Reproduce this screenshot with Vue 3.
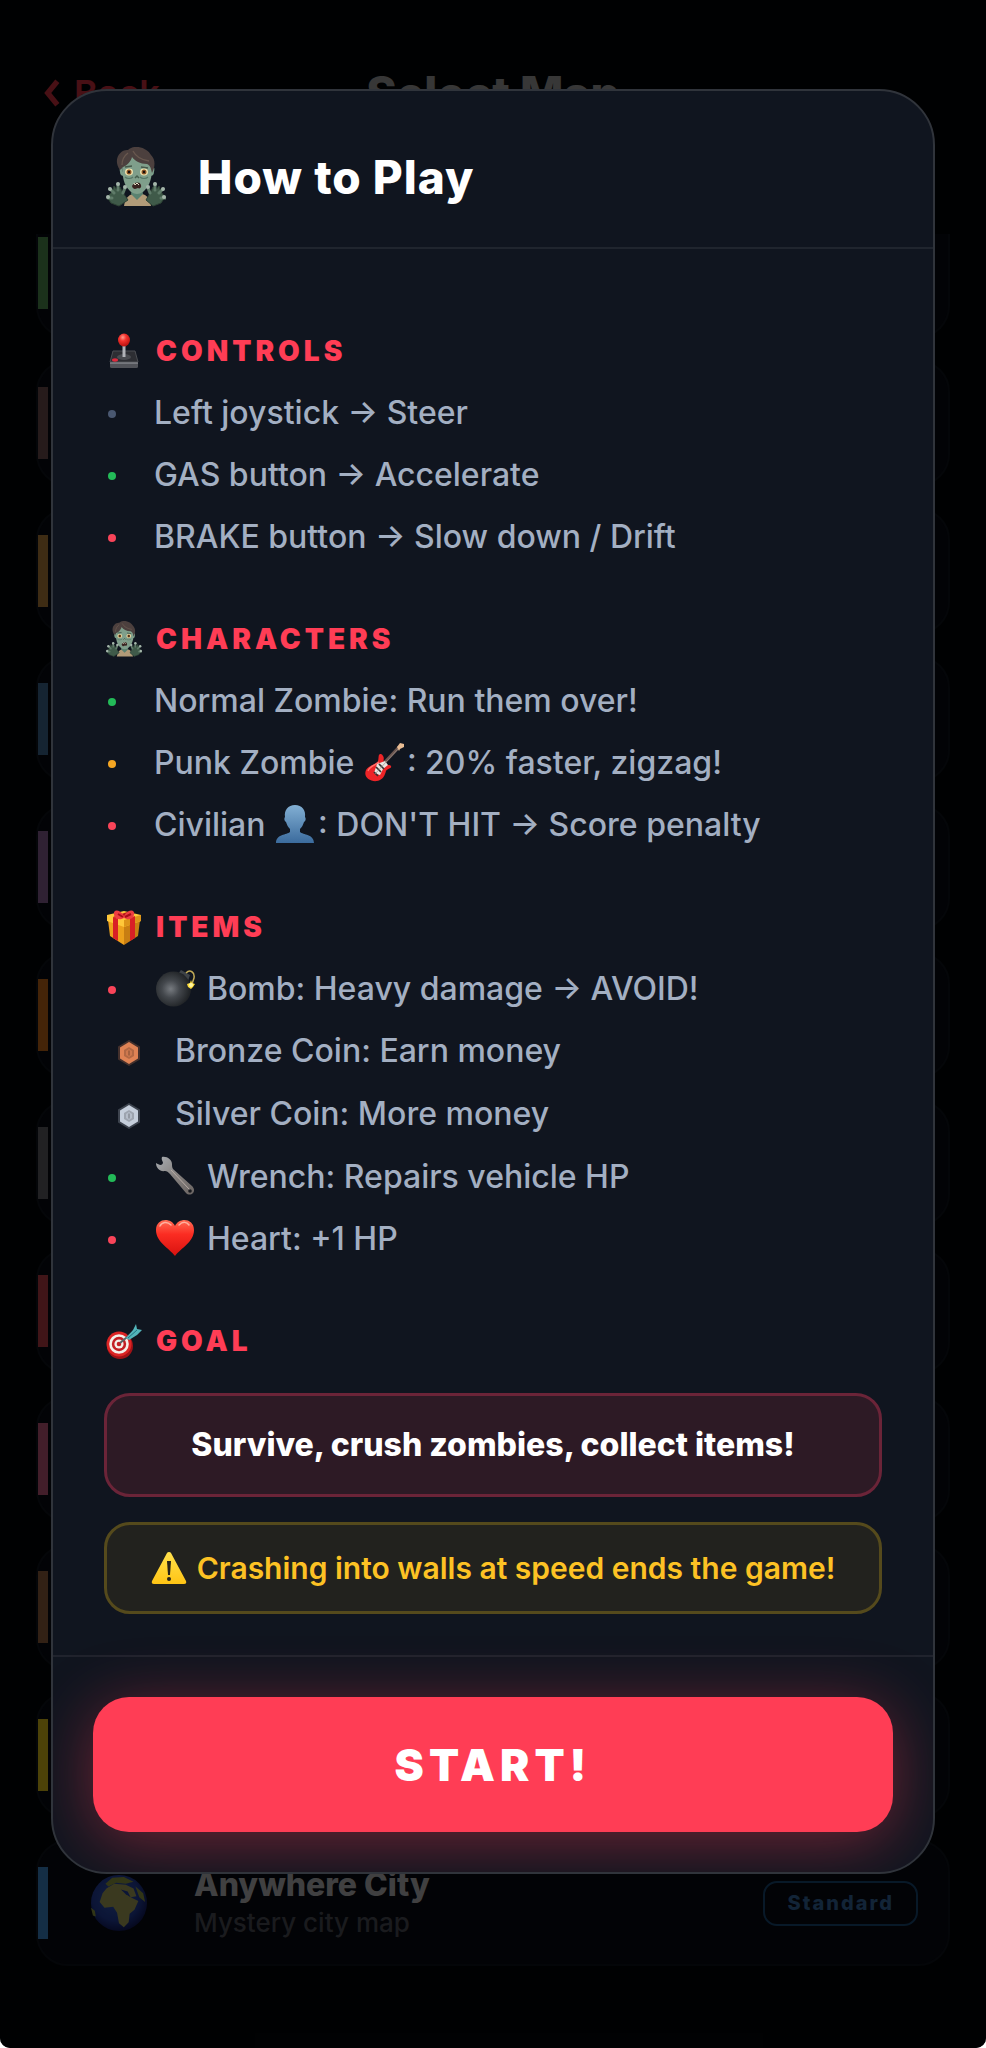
<template>
  <div class="screen">

    <!-- SPRITE -->
    <svg class="sprite" aria-hidden="true">
      <defs>
        <linearGradient id="g-bust" x1="0" y1="0" x2="0" y2="1">
          <stop offset="0" stop-color="#82afd3" />
          <stop offset="1" stop-color="#3b6b9d" />
        </linearGradient>
        <linearGradient id="g-heart" x1="0" y1="0" x2="0" y2="1">
          <stop offset="0" stop-color="#ff6d55" />
          <stop offset="0.4" stop-color="#fb2c22" />
          <stop offset="1" stop-color="#d8120f" />
        </linearGradient>
        <linearGradient id="g-metal" x1="0" y1="0" x2="1" y2="1">
          <stop offset="0" stop-color="#a9adb2" />
          <stop offset="0.5" stop-color="#85817f" />
          <stop offset="1" stop-color="#6a6462" />
        </linearGradient>
        <linearGradient id="g-warn" x1="0" y1="0" x2="0" y2="1">
          <stop offset="0" stop-color="#ffe14d" />
          <stop offset="1" stop-color="#ffc414" />
        </linearGradient>
        <radialGradient id="g-bomb" cx="0.42" cy="0.5" r="0.55">
          <stop offset="0" stop-color="#777b80" />
          <stop offset="0.45" stop-color="#44484d" />
          <stop offset="1" stop-color="#202326" />
        </radialGradient>
        <radialGradient id="g-ball" cx="0.4" cy="0.3" r="0.7">
          <stop offset="0" stop-color="#ff9a8c" />
          <stop offset="0.4" stop-color="#f5332e" />
          <stop offset="1" stop-color="#b8110f" />
        </radialGradient>
        <radialGradient id="g-earth" cx="0.45" cy="0.4" r="0.6">
          <stop offset="0" stop-color="#3c69d8" />
          <stop offset="0.7" stop-color="#2746b4" />
          <stop offset="1" stop-color="#141f6b" />
        </radialGradient>
      </defs>

      <symbol id="zombie" viewBox="0 0 60 60">
        <path d="M18 59c1-7 4-11 9-12h9c5 1 8 5 9 12z" fill="#b19b78" />
        <path d="M25 47l6 6 6-6-1-5H26z" fill="#5a8270" />
        <path d="M16 22c-1-3-3-1-2 3 0 3 2 4 4 4zM46 22c2-3 3-1 2 3 0 3-2 4-4 4z" fill="#7c9f8a" />
        <path d="M16 16c0-9 30-10 30 3 0 9-1 15-4 20-3 5-7 8-11 8s-8-3-11-8c-3-5-4-14-4-23z" fill="#7f9f8b" />
        <path d="M14 23C6 12 15 2 22 3c8-7 20-1 23 5 5 5 4 12 1 18-1-5-2-8-5-9-7 0-12-3-15-7-1 5-6 9-9 10-1 1-2 2-3 3z" fill="#4c403e" />
        <path d="M27 4c3 6 9 9 16 10M22 6c-4 3-6 7-6 12" fill="none" stroke="#69584f" stroke-width="1.3" />
        <path d="M19 20l7-1M35 20l7 1" stroke="#46594b" stroke-width="1.4" />
        <ellipse cx="23" cy="25" rx="4" ry="3.4" fill="#f1e3ad" />
        <ellipse cx="38" cy="25" rx="4" ry="3.4" fill="#f1e3ad" />
        <circle cx="23" cy="25" r="2.5" fill="#8c5425" />
        <circle cx="38" cy="25" r="2.5" fill="#8c5425" />
        <circle cx="23" cy="25" r="1.2" fill="#15100d" />
        <circle cx="38" cy="25" r="1.2" fill="#15100d" />
        <path d="M19 30c2 2 6 2 8 0M34 30c2 2 6 2 8 0" fill="none" stroke="#567766" stroke-width="1.2" />
        <path d="M29 31l2-2 2 2" stroke="#45604f" stroke-width="1.5" fill="none" />
        <path d="M26 39c2-4 8-5 9-1 1 3-2 4-3 3-2 1-5 2-6-2z" fill="#392421" />
        <path d="M28 36l1 2 2-2 2 2" stroke="#e6e2c8" fill="none" />
        <path d="M17 46l-3-6-2 4-4-5-2 6-5 5 4 6 8 3 9-6zM44 46l3-6 2 4 4-5 2 6 4 5-4 6-8 3-7-6z" fill="#3f5a49" stroke="#2e4235" />
        <path d="M8 46L4 42M12 43V37M17 46l2-5M6 51H2M53 46l4-4M49 43v-6M44 46l-2-5M55 51h4" fill="none" stroke="#5f7b69" stroke-width="3" stroke-linecap="round" />
        <g fill="#a4b5aa">
          <circle cx="4" cy="42" r="2" /><circle cx="12" cy="37" r="2" /><circle cx="19" cy="40" r="2" /><circle cx="2" cy="50" r="2" />
          <circle cx="57" cy="42" r="2" /><circle cx="49" cy="37" r="2" /><circle cx="42" cy="40" r="2" /><circle cx="58" cy="50" r="2" />
        </g>
      </symbol>

      <symbol id="joystick" viewBox="0 0 36 36">
        <path d="M7 18h22l3 13-1 4H5l-1-4z" fill="#3b3d42" />
        <path d="M7 18h22l3 11H4z" fill="#2d2e33" stroke="#4b4d52" />
        <path d="M4 30h28v4q0 1-2 1H6q-2 0-2-1z" fill="#515359" />
        <path d="M4 30h28" stroke="#9a9ca1" />
        <ellipse cx="18" cy="24" rx="7" ry="3" fill="#494b50" />
        <path d="M16.5 10h3v14h-3z" fill="#b1b3b8" />
        <ellipse cx="18" cy="7" rx="6" ry="6.5" fill="url(#g-ball)" />
        <ellipse cx="9" cy="27" rx="3" ry="1.7" fill="#dd2b3e" />
      </symbol>

      <symbol id="gift" viewBox="0 0 36 36">
        <path d="M2 11l16 6v19L4 27z" fill="#eda11c" />
        <path d="M34 11l-16 6v19l14-9z" fill="#c87e12" />
        <path d="M1 6l17-4 17 4v6l-17 6L1 12z" fill="#ffc83a" />
        <path d="M18 11l17-5v6l-17 6z" fill="#dd9519" />
        <path d="M7 8l5 2v22l-5-3zM24 9l5-2v22l-5 3z" fill="#d91f26" />
        <path d="M7 8l17-6 5 2-17 6z" fill="#b5151c" />
        <path d="M18 9C12 12 8 9 8 5c-1-5 6-5 10 2 4-7 11-7 10-2 0 4-4 7-10 4z" fill="#ef3e42" />
        <path d="M12 5l5 3M25 5l-6 3" stroke="#a80e18" stroke-width="2" />
      </symbol>

      <symbol id="target" viewBox="0 0 36 36">
        <ellipse cx="14" cy="23" rx="13" ry="13" fill="#a01216" />
        <ellipse cx="13" cy="21" rx="12.5" ry="12.5" fill="#dc2424" />
        <circle cx="13" cy="21" r="9.8" fill="#f4efe9" />
        <circle cx="13" cy="21" r="7.2" fill="#c32024" />
        <circle cx="13" cy="21" r="4.6" fill="#f4efe9" />
        <circle cx="13" cy="21" r="2.3" fill="#c32024" />
        <path d="M14 20L26 10" stroke="#5a6668" stroke-width="2" />
        <path d="M20 15l7-8 3-6 1 5 5 1-5 5-8 5z" fill="#53b4ba" />
        <path d="M22 15l9-8" stroke="#1e7683" />
      </symbol>

      <symbol id="guitar" viewBox="0 0 40 40">
        <path d="M21 20L35 5" stroke="#6c5650" stroke-width="3" />
        <path d="M33 5l3-4 4 1v3l-4 2-1 2z" fill="#e9bd94" />
        <path d="M16 12c-2 1-1 4-2 7-1 3-9 4-12 9-3 7 4 12 11 11 6-1 8-6 9-10 2-3 6-2 5-5-1-2-4 0-6-2-3-2 0-6-2-8-1-2-2-2-3-2z" fill="#ed2427" />
        <path d="M4 29c1-5 8-6 11-9" fill="none" stroke="#ff716b" stroke-width="1.4" />
        <path d="M13 22l8-3 3 4-5 4-3 6-6-2z" fill="#e8e6e2" />
        <path d="M12 25l5 5M15 22l5 5M10 30l4 4" stroke="#34302f" stroke-width="1.7" />
        <path d="M11 32L34 7" stroke="#9a8f89" stroke-width="0.7" />
      </symbol>

      <symbol id="bust" viewBox="0 0 40 40">
        <path d="M20 1c7 0 11 5 10 12 1 1 1 4-1 5-1 3-2 5-4 7v3c3 3 14 2 14 11H1c0-9 11-8 14-11v-3c-2-2-3-4-4-7-2-1-2-4-1-5C9 6 13 1 20 1z" fill="url(#g-bust)" />
      </symbol>

      <symbol id="bomb" viewBox="0 0 40 40">
        <path d="M23 6l3-4 9 5-2 6z" fill="#3e4348" />
        <circle cx="18.5" cy="21" r="17.5" fill="url(#g-bomb)" />
        <path d="M31 5c4-4 9-1 8 5l-2 6" fill="none" stroke="#c2ab57" stroke-width="1.5" />
        <path d="M36 12l1 3 3 1-2 3-2 2-3-2-1-3 3-1z" fill="#ffdd3a" />
        <circle cx="36" cy="17" r="2" fill="#fff7a5" />
      </symbol>

      <symbol id="wrench" viewBox="0 0 40 40">
        <path d="M7 1c-1 3 1 4 1 6-1 3-4 2-7 0 0 5 4 9 9 8 2 0 3 1 5 3l16 19c2 2 5 2 7 0s1-5-1-7L18 13c-1-2-1-3-1-5 0-4-5-8-10-7z" fill="url(#g-metal)" />
        <path d="M16 14l19 20" stroke="#b8aca6" stroke-width="1" />
        <circle cx="35" cy="35" r="1.8" fill="#17191e" />
      </symbol>

      <symbol id="heart" viewBox="0 0 40 40">
        <path d="M20 38C14 30 1 24 1 12 1 0 16-1 20 8c4-9 19-8 19 4 0 12-13 18-19 26z" fill="url(#g-heart)" />
        <path d="M5 8c2-4 7-5 11-1M24 7c4-4 8-3 10 0" fill="none" stroke="#ffb09f" stroke-width="1.5" stroke-linecap="round" />
      </symbol>

      <symbol id="warning" viewBox="0 0 36 36">
        <path d="M18 2q1.5 0 2 1l15 28q1 3-2 3H3q-3 0-2-3L16 3q.5-1 2-1z" fill="url(#g-warn)" />
        <path d="M16 11h4l-1 14h-2z" fill="#26221a" />
        <circle cx="18" cy="29" r="2" fill="#26221a" />
      </symbol>

      <symbol id="coin" viewBox="0 0 28 28">
        <path d="M14 1l11 6.5v13L14 27 3 20.5v-13z" fill="currentColor" opacity="0.25" />
        <path d="M14 3l9 5.5v11L14 25l-9-5.5v-11z" fill="currentColor" />
        <path d="M14 8l5 3v6l-5 3-5-3v-6z" fill="#000" opacity="0.2" />
        <path d="M14 10l3 2v4l-3 2-3-2v-4z" fill="currentColor" opacity="0.6" />
        <path d="M14 11.5v5" stroke="#000" opacity="0.25" stroke-width="1.5" />
      </symbol>

      <symbol id="earth" viewBox="0 0 60 60">
        <circle cx="30" cy="30" r="29" fill="url(#g-earth)" />
        <path d="M17 15l8-5 12 1 8 4 3 8-6 1 8 4-4 9-5 4-1 9-5 5-5-4-2-11-4-6-9 1-5-6 3-9z" fill="#c2c06a" />
        <path d="M16 10l7-6 12-1 10 5-8 2-10-1-8 4zM1 35l4 3 1 6-3-1zM47 13l8 7 2 9-6-5z" fill="#a5b24c" />
        <path d="M32 16l7 2 3 6-5-3z" fill="#2746b4" />
      </symbol>
    </svg>

    <!-- MAP LIST -->
    <div class="maps">
      <header class="maps__header">
        <a class="maps__back" href="#">
          <svg viewBox="0 0 20 28" aria-hidden="true"><path d="M15 3L6 14l9 11" /></svg>
          Back
        </a>
        <h2>Select Map</h2>
      </header>

      <ul class="maps__list">
        <li v-for="(map, index) in maps" :key="index" class="card">
          <span class="card__bar" :style="{ backgroundColor: map.color }"></span>
          <template v-if="map.name">
            <svg class="card__icon" aria-hidden="true"><use href="#earth" /></svg>
            <div class="card__info">
              <h3>{{ map.name }}</h3>
              <p>{{ map.description }}</p>
            </div>
            <span class="card__badge">{{ map.badge }}</span>
          </template>
        </li>
      </ul>
    </div>

    <!-- MODAL -->
    <div class="overlay">
      <section class="modal" role="dialog" aria-labelledby="modal-title">
        <header class="modal__header">
          <svg aria-hidden="true"><use href="#zombie" /></svg>
          <h1 id="modal-title">How to Play</h1>
        </header>

        <div class="modal__body">
          <section v-for="section in sections" :key="section.title">
            <h2 class="heading">
              <svg aria-hidden="true"><use :href="'#' + section.icon" /></svg>
              {{ section.title }}
            </h2>
            <ul class="rules">
              <li v-for="(rule, index) in section.rules" :key="index" class="rule" :class="{ 'rule--coin': rule.coin }">
                <svg v-if="rule.coin" class="rule__coin" :class="'rule__coin--' + rule.coin" aria-hidden="true">
                  <use href="#coin" />
                </svg>
                <span v-else class="rule__dot" :class="'rule__dot--' + rule.dot"></span>
                <p>
                  {{ rule.before }}
                  <svg v-if="rule.icon" class="emoji" :class="{ 'emoji--first': !rule.before }" aria-hidden="true"><use :href="'#' + rule.icon" /></svg>{{ rule.text }}
                </p>
              </li>
            </ul>
          </section>

          <section>
            <h2 class="heading">
              <svg aria-hidden="true"><use href="#target" /></svg>
              GOAL
            </h2>
            <div class="goal">
              <p class="goal__box goal__box--main">Survive, crush zombies, collect items!</p>
              <p class="goal__box goal__box--warning">
                <svg aria-hidden="true"><use href="#warning" /></svg>
                Crashing into walls at speed ends the game!
              </p>
            </div>
          </section>
        </div>

        <footer class="modal__footer">
          <button type="button" class="btn">START!</button>
        </footer>
      </section>
    </div>

  </div>
</template>

<script setup>
const maps = [
  { color: "#5aa35d" },
  { color: "#7f5d5d" },
  { color: "#cf9343" },
  { color: "#497ba7" },
  { color: "#9d6eaa" },
  { color: "#e3781b" },
  { color: "#6e7175" },
  { color: "#d54950" },
  { color: "#dc648c" },
  { color: "#a77149" },
  { color: "#ffdc1b" },
  { color: "#4399e7", name: "Anywhere City", description: "Mystery city map", badge: "Standard" }
];

const sections = [
  {
    title: "CONTROLS",
    icon: "joystick",
    rules: [
      { dot: "gray", text: "Left joystick → Steer" },
      { dot: "green", text: "GAS button → Accelerate" },
      { dot: "red", text: "BRAKE button → Slow down / Drift" }
    ]
  },
  {
    title: "CHARACTERS",
    icon: "zombie",
    rules: [
      { dot: "green", text: "Normal Zombie: Run them over!" },
      { dot: "orange", before: "Punk Zombie", icon: "guitar", text: ": 20% faster, zigzag!" },
      { dot: "red", before: "Civilian", icon: "bust", text: ": DON'T HIT → Score penalty" }
    ]
  },
  {
    title: "ITEMS",
    icon: "gift",
    rules: [
      { dot: "red", icon: "bomb", text: "Bomb: Heavy damage → AVOID!" },
      { coin: "bronze", text: "Bronze Coin: Earn money" },
      { coin: "silver", text: "Silver Coin: More money" },
      { dot: "green", icon: "wrench", text: "Wrench: Repairs vehicle HP" },
      { dot: "red", icon: "heart", text: "Heart: +1 HP" }
    ]
  }
];
</script>

<style>
body {
  background-color: #ffffff;
}
</style>

<style scoped>
/* BASE */
.screen {
  position: relative;
  min-height: 100vh;
  overflow: hidden;
  border-radius: 0 0 10px 10px;
  background-color: #030609;
  font-family: Inter, "Liberation Sans", sans-serif;
}

.sprite {
  position: absolute;
  width: 0;
  height: 0;
}

h1, h2, h3, p, ul {
  margin: 0;
  padding: 0;
}

ul {
  list-style: none;
}

/* MAP LIST */
.maps__header {
  display: grid;
  grid-template-columns: 1fr auto 1fr;
  align-items: center;
  box-sizing: border-box;
  height: 234px;
  padding: 0 40px 48px;
}

.maps__header h2 {
  color: #b8b8ba;
  font-size: 46px;
  font-weight: 800;
}

.maps__back {
  display: flex;
  align-items: center;
  gap: 10px;
  color: #f03848;
  font-size: 36px;
  font-weight: 600;
  text-decoration: none;
}

.maps__back svg {
  width: 24px;
  height: 30px;
  fill: none;
  stroke: currentColor;
  stroke-width: 5;
}

.maps__list {
  display: flex;
  flex-direction: column;
  gap: 22px;
  margin: 0 36px;
}

.card {
  display: flex;
  align-items: center;
  box-sizing: border-box;
  height: 126px;
  padding-right: 30px;
  border: 2px solid #10151e;
  border-radius: 32px;
  background-color: #070a14;
}

.card:first-child {
  height: 104px;
  padding-bottom: 24px;
  border-top: none;
  border-radius: 0 0 32px 32px;
}

.card__bar {
  width: 10px;
  height: 72px;
}

.card__icon {
  width: 58px;
  height: 58px;
  margin: 0 46px 0 42px;
}

.card__info {
  flex: 1;
}

.card__info h3 {
  color: #d8d8da;
  font-size: 32px;
  font-weight: 800;
  line-height: 40px;
}

.card__info p {
  color: #585b64;
  font-size: 26px;
  font-weight: 500;
  line-height: 36px;
}

.card__badge {
  padding: 8px 22px;
  border: 2px solid #1d5487;
  border-radius: 14px;
  color: #3c78b8;
  font-size: 20px;
  font-weight: 800;
  line-height: 25px;
  letter-spacing: 2px;
}

/* OVERLAY */
.overlay {
  position: absolute;
  inset: 0;
  padding: 89px 51px;
  background-color: rgba(0, 0, 0, 0.7);
}

/* MODAL */
.modal {
  overflow: hidden;
  border: 2px solid #30343b;
  border-radius: 56px;
  background-color: #10151f;
}

.modal__header {
  display: flex;
  align-items: center;
  gap: 32px;
  padding: 54px 53px 38px;
  border-bottom: 2px solid #20252e;
}

.modal__header svg {
  width: 60px;
  height: 60px;
}

.modal__header h1 {
  color: #ffffff;
  font-size: 46px;
  font-weight: 800;
  line-height: 64px;
  letter-spacing: 1px;
}

.modal__body {
  display: flex;
  flex-direction: column;
  gap: 54px;
  padding: 84px 51px 41px;
}

.heading {
  display: flex;
  align-items: center;
  gap: 14px;
  padding-left: 2px;
  color: #ff3d55;
  font-size: 28px;
  font-weight: 900;
  line-height: 36px;
  letter-spacing: 4px;
}

.heading svg {
  width: 36px;
  height: 36px;
}

/* RULES */
.rules {
  margin-top: 12px;
}

.rule {
  display: flex;
  align-items: center;
  height: 62px;
  color: #a3afc2;
  font-size: 32px;
  font-weight: 500;
}

.rule--coin {
  height: 63px;
}

.rule__dot {
  width: 8px;
  height: 8px;
  margin: 4px 38px 0 4px;
  border-radius: 50%;
}

.rule__dot--gray {
  background-color: #4a5871;
}

.rule__dot--green {
  background-color: #23ba58;
}

.rule__dot--red {
  background-color: #f94459;
}

.rule__dot--orange {
  background-color: #f5a623;
}

.rule__coin {
  width: 28px;
  height: 28px;
  margin: 4px 32px 0 11px;
}

.rule__coin--bronze {
  color: #e08355;
}

.rule__coin--silver {
  color: #c5cedb;
}

.emoji {
  width: 40px;
  height: 40px;
  margin: 0 3px 0 1px;
  vertical-align: -8px;
}

.emoji--first {
  margin: 0 12px 0 1px;
}

/* GOAL */
.goal {
  display: flex;
  flex-direction: column;
  gap: 25px;
  margin-top: 34px;
}

.goal__box {
  display: flex;
  justify-content: center;
  align-items: center;
  gap: 10px;
  border: 3px solid;
  border-radius: 26px;
}

.goal__box--main {
  padding: 29px 16px;
  border-color: #6b2438;
  background-color: #2d1a25;
  color: #ffffff;
  font-size: 32px;
  font-weight: 800;
  line-height: 40px;
}

.goal__box--warning {
  padding: 25px 16px;
  border-color: #554a1c;
  background-color: #22221e;
  color: #fdc224;
  font-size: 30px;
  font-weight: 600;
  line-height: 36px;
}

.goal__box svg {
  width: 36px;
  height: 36px;
}

/* FOOTER */
.modal__footer {
  padding: 40px;
  border-top: 2px solid #20232d;
}

.btn {
  width: 100%;
  height: 135px;
  border: none;
  border-radius: 36px;
  background-color: #ff3d55;
  box-shadow: 0 10px 64px rgba(255, 61, 85, 0.4);
  color: #ffffff;
  font-family: inherit;
  font-size: 44px;
  font-weight: 900;
  letter-spacing: 5px;
  cursor: pointer;
}
</style>
